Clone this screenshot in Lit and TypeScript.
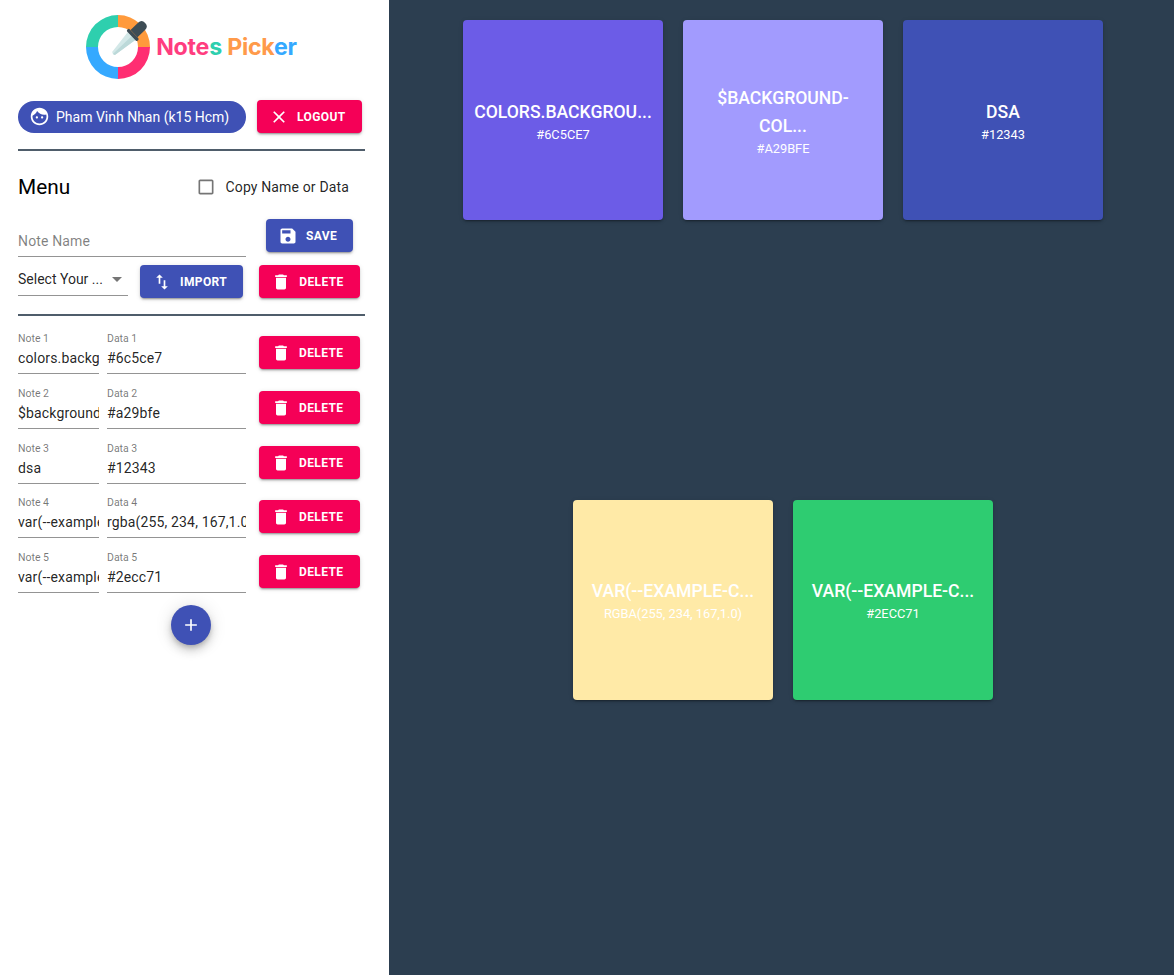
import { LitElement, html, css, svg } from 'lit';
import { customElement } from 'lit/decorators.js';

const ICONS: Record<string, string> = {
  close: 'M19 6.41L17.59 5 12 10.59 6.41 5 5 6.41 10.59 12 5 17.59 6.41 19 12 13.41 17.59 19 19 17.59 13.41 12z',
  save: 'M17 3H5c-1.11 0-2 .9-2 2v14c0 1.1.89 2 2 2h14c1.1 0 2-.9 2-2V7l-4-4zm-5 16c-1.66 0-3-1.34-3-3s1.34-3 3-3 3 1.34 3 3-1.34 3-3 3zm3-10H5V5h10v4z',
  swap: 'M9 3L5 6.99h3V14h2V6.99h3L9 3zm7 14.01V10h-2v7.01h-3L15 21l4-3.99h-3z',
  trash: 'M6 19c0 1.1.9 2 2 2h8c1.1 0 2-.9 2-2V7H6v12zM19 4h-3.5l-1-1h-5l-1 1H5v2h14V4z',
  add: 'M19 13h-6v6h-2v-6H5v-2h6V5h2v6h6v2z',
  face: 'M9 11.75c-.69 0-1.25.56-1.25 1.25s.56 1.25 1.25 1.25 1.25-.56 1.25-1.25-.56-1.25-1.25-1.25zm6 0c-.69 0-1.25.56-1.25 1.25s.56 1.25 1.25 1.25 1.25-.56 1.25-1.25-.56-1.25-1.25-1.25zM12 2C6.48 2 2 6.48 2 12s4.48 10 10 10 10-4.48 10-10S17.52 2 12 2zm0 18c-4.41 0-8-3.59-8-8 0-.29.02-.58.05-.86 2.36-1.05 4.23-2.98 5.21-5.37C11.07 8.33 14.05 10 17.42 10c.78 0 1.53-.09 2.25-.26.21.71.33 1.47.33 2.26 0 4.41-3.59 8-8 8z',
  box: 'M19 5v14H5V5h14m0-2H5c-1.1 0-2 .9-2 2v14c0 1.1.9 2 2 2h14c1.1 0 2-.9 2-2V5c0-1.1-.9-2-2-2z',
};

const icon = (name: string) => html`<svg class="icon" viewBox="0 0 24 24" fill="currentColor"><path d=${ICONS[name]}></path></svg>`;

const NOTES = [
  { name: 'colors.background-color', data: '#6c5ce7', bg: '#6c5ce7' },
  { name: '$background-color', data: '#a29bfe', bg: '#a29bfe' },
  { name: 'dsa', data: '#12343', bg: '#3f51b5' },
  { name: 'var(--example-color)', data: 'rgba(255, 234, 167,1.0)', bg: '#ffeaa7' },
  { name: 'var(--example-color)', data: '#2ecc71', bg: '#2ecc71' },
];

const short = (s: string) => (s.length > 15 ? s.slice(0, 15) + '...' : s);

const logoMark = svg`
  <path d="M32 0A32 32 0 0 0 0 32H12A20 20 0 0 1 32 12Z" fill="#2ecfae"/>
  <path d="M32 0A32 32 0 0 1 64 32H52A20 20 0 0 0 32 12Z" fill="#ff9a3c"/>
  <path d="M64 32A32 32 0 0 1 32 64V52A20 20 0 0 0 52 32Z" fill="#ff2e72"/>
  <path d="M32 64A32 32 0 0 1 0 32H12A20 20 0 0 0 32 52Z" fill="#35a9ff"/>
  <g transform="translate(27.5 38.5) rotate(46)">
    <path d="M-2 0L-5.5 -25H5.5L2 0Q0 1.5 -2 0Z" fill="#d3e8e8"/>
    <path d="M0 0.8V-25H5.5L2 0Q1 0.8 0 0.8Z" fill="#bcd9d9"/>
    <rect x="-7.5" y="-28.5" width="15" height="3.5" rx="1.5" fill="#3d4c55"/>
    <path d="M-5 -28.5V-39Q-5 -44 0 -44Q5 -44 5 -39V-28.5Z" fill="#3d4c55"/>
  </g>
`;

@customElement('app-root')
export class AppRoot extends LitElement {
  static styles = css`
    :host {
      display: flex;
      min-height: 100vh;
      font-family: Roboto, "Liberation Sans", sans-serif;
      color: rgba(0, 0, 0, 0.87);
    }

    .side {
      width: 389px;
      flex: none;
      box-sizing: border-box;
      padding: 15px 24px 0 18px;
      background: #fff;
    }

    .main {
      flex: 1;
      min-width: 0;
      background: #2c3e50;
      padding: 20px 0 0 3px;
    }

    .brand {
      display: flex;
      align-items: center;
      justify-content: center;
      gap: 6px;
      height: 64px;
      margin: 0 0 21px;
    }

    .brand svg { width: 64px; height: 64px; flex: none; }

    .brand-name {
      font-family: Inter, Roboto, sans-serif;
      font-size: 23.2px;
      font-weight: 700;
      letter-spacing: -0.25px;
      white-space: nowrap;
    }

    .pink { color: #ff3d7f; }
    .teal { color: #2ecfae; }
    .orange { color: #ff9a4a; }
    .blue { color: #35a9ff; }

    .top-row {
      display: flex;
      align-items: center;
      gap: 11px;
    }

    .chip {
      display: flex;
      align-items: center;
      box-sizing: border-box;
      width: 228px;
      height: 32px;
      padding-left: 11px;
      border-radius: 16px;
      background: #3f51b5;
      color: #fff;
      font-size: 14px;
      white-space: nowrap;
    }

    .chip .icon { width: 21px; height: 21px; margin-right: 6px; }

    .rule {
      height: 2px;
      margin-top: 16px;
      background: #4f5d6b;
    }

    .menu-row {
      display: flex;
      align-items: center;
      justify-content: space-between;
      box-sizing: border-box;
      height: 68px;
      padding: 4px 16px 0 0;
    }

    .menu-title { font-size: 20.8px; color: #000; }

    .check {
      display: flex;
      align-items: center;
      font-size: 14px;
      letter-spacing: 0.15px;
    }

    .check .icon {
      width: 20px;
      height: 20px;
      margin-right: 9px;
      color: rgba(0, 0, 0, 0.54);
    }

    .form-row {
      display: flex;
      align-items: flex-start;
      margin-bottom: 8px;
    }

    .note-name {
      display: block;
      box-sizing: border-box;
      width: 228px;
      height: 38px;
      margin-right: 20px;
      padding: 6px 0 0;
      border: 0;
      border-bottom: 1px solid #949494;
      outline: 0;
      background: transparent;
      font: 14px Roboto, sans-serif;
      letter-spacing: 0.15px;
    }

    .note-name::placeholder { color: rgba(0, 0, 0, 0.5); opacity: 1; }

    .select {
      display: flex;
      align-items: center;
      justify-content: space-between;
      box-sizing: border-box;
      width: 110px;
      height: 31px;
      padding: 0 6px 2px 0;
      margin-right: 12px;
      border-bottom: 1px solid #949494;
      font-size: 14px;
      white-space: nowrap;
    }

    .caret {
      width: 0;
      height: 0;
      border-left: 5px solid transparent;
      border-right: 5px solid transparent;
      border-top: 5px solid rgba(0, 0, 0, 0.54);
    }

    .btn {
      display: inline-flex;
      align-items: center;
      flex: none;
      box-sizing: border-box;
      height: 33px;
      padding: 0 16px 0 12px;
      border: 0;
      border-radius: 4px;
      color: #fff;
      font: 700 12px Roboto, sans-serif;
      letter-spacing: 0.4px;
      box-shadow: 0 3px 1px -2px rgba(0, 0, 0, 0.2), 0 2px 2px 0 rgba(0, 0, 0, 0.14), 0 1px 5px 0 rgba(0, 0, 0, 0.12);
    }

    .btn .icon { width: 20px; height: 20px; margin-right: 8px; }
    .primary { background: #3f51b5; }
    .danger { background: #f50057; }
    .gap-left { margin-left: 16px; }

    .form-row + .rule { margin-top: 16px; }

    .notes {
      display: flex;
      flex-direction: column;
      gap: 11px;
      margin-top: 14px;
    }

    .note {
      display: flex;
      align-items: flex-start;
      height: 44px;
    }

    .note:nth-child(4) { margin-top: -1px; }

    .field {
      display: flex;
      flex-direction: column;
      box-sizing: border-box;
      height: 44px;
      border-bottom: 1px solid #949494;
    }

    .field.name { width: 81px; margin-right: 8px; }
    .field.data { width: 139px; margin-right: 13px; }

    .field label {
      box-sizing: border-box;
      height: 16px;
      padding-top: 2px;
      font-size: 10.5px;
      line-height: 13px;
      color: rgba(0, 0, 0, 0.54);
    }

    .field input {
      width: 100%;
      min-width: 0;
      height: 24px;
      padding: 0;
      border: 0;
      outline: 0;
      background: transparent;
      color: rgba(0, 0, 0, 0.87);
      font: 14px Roboto, sans-serif;
      letter-spacing: 0.15px;
    }

    .note .btn { margin-top: 6px; }

    .fab-row {
      display: flex;
      justify-content: center;
      padding-right: 1px;
      margin-top: 12px;
    }

    .fab {
      display: flex;
      align-items: center;
      justify-content: center;
      width: 40px;
      height: 40px;
      border-radius: 50%;
      background: #3f51b5;
      color: #fff;
      box-shadow: 0 3px 5px -1px rgba(0, 0, 0, 0.2), 0 6px 10px 0 rgba(0, 0, 0, 0.14), 0 1px 18px 0 rgba(0, 0, 0, 0.12);
    }

    .fab .icon { width: 20px; height: 20px; }

    .board {
      display: flex;
      flex-wrap: wrap;
      justify-content: center;
      column-gap: 20px;
      row-gap: 280px;
      width: 640px;
      margin: 0 auto;
    }

    .card {
      display: flex;
      flex-direction: column;
      align-items: center;
      justify-content: center;
      box-sizing: border-box;
      width: 200px;
      height: 200px;
      padding: 2px 10.5px 0;
      border-radius: 4px;
      color: #fff;
      text-align: center;
      text-transform: uppercase;
      box-shadow: 0 3px 1px -2px rgba(0, 0, 0, 0.2), 0 2px 2px 0 rgba(0, 0, 0, 0.14), 0 1px 5px 0 rgba(0, 0, 0, 0.12);
    }

    .card:nth-child(n + 4) { padding-top: 0; }

    .card-title {
      font-size: 17.6px;
      font-weight: 500;
      line-height: 28px;
    }

    .card-value {
      font-size: 12.8px;
      line-height: 18px;
    }
  `;

  render() {
    return html`
      <aside class="side">
        <div class="brand">
          <svg viewBox="0 0 64 64">${logoMark}</svg>
          <div class="brand-name">
            <span class="pink">Note</span><span class="teal">s</span>
            <span class="orange">Pick</span><span class="blue">er</span>
          </div>
        </div>

        <div class="top-row">
          <div class="chip">${icon('face')}Pham Vinh Nhan (k15 Hcm)</div>
          <button class="btn danger">${icon('close')}LOGOUT</button>
        </div>
        <div class="rule"></div>

        <div class="menu-row">
          <div class="menu-title">Menu</div>
          <label class="check">${icon('box')}Copy Name or Data</label>
        </div>

        <div class="form-row">
          <input class="note-name" placeholder="Note Name" />
          <button class="btn primary">${icon('save')}SAVE</button>
        </div>
        <div class="form-row">
          <div class="select">Select Your ...<span class="caret"></span></div>
          <button class="btn primary">${icon('swap')}IMPORT</button>
          <button class="btn danger gap-left">${icon('trash')}DELETE</button>
        </div>
        <div class="rule"></div>

        <div class="notes">
          ${NOTES.map((n, i) => html`
            <div class="note">
              <div class="field name">
                <label>Note ${i + 1}</label>
                <input .value=${n.name} />
              </div>
              <div class="field data">
                <label>Data ${i + 1}</label>
                <input .value=${n.data} />
              </div>
              <button class="btn danger">${icon('trash')}DELETE</button>
            </div>
          `)}
        </div>
        <div class="fab-row"><div class="fab">${icon('add')}</div></div>
      </aside>

      <main class="main">
        <div class="board">
          ${NOTES.map((n) => html`
            <div class="card" style="background:${n.bg}">
              <div class="card-title">${short(n.name)}</div>
              <div class="card-value">${n.data}</div>
            </div>
          `)}
        </div>
      </main>
    `;
  }
}
